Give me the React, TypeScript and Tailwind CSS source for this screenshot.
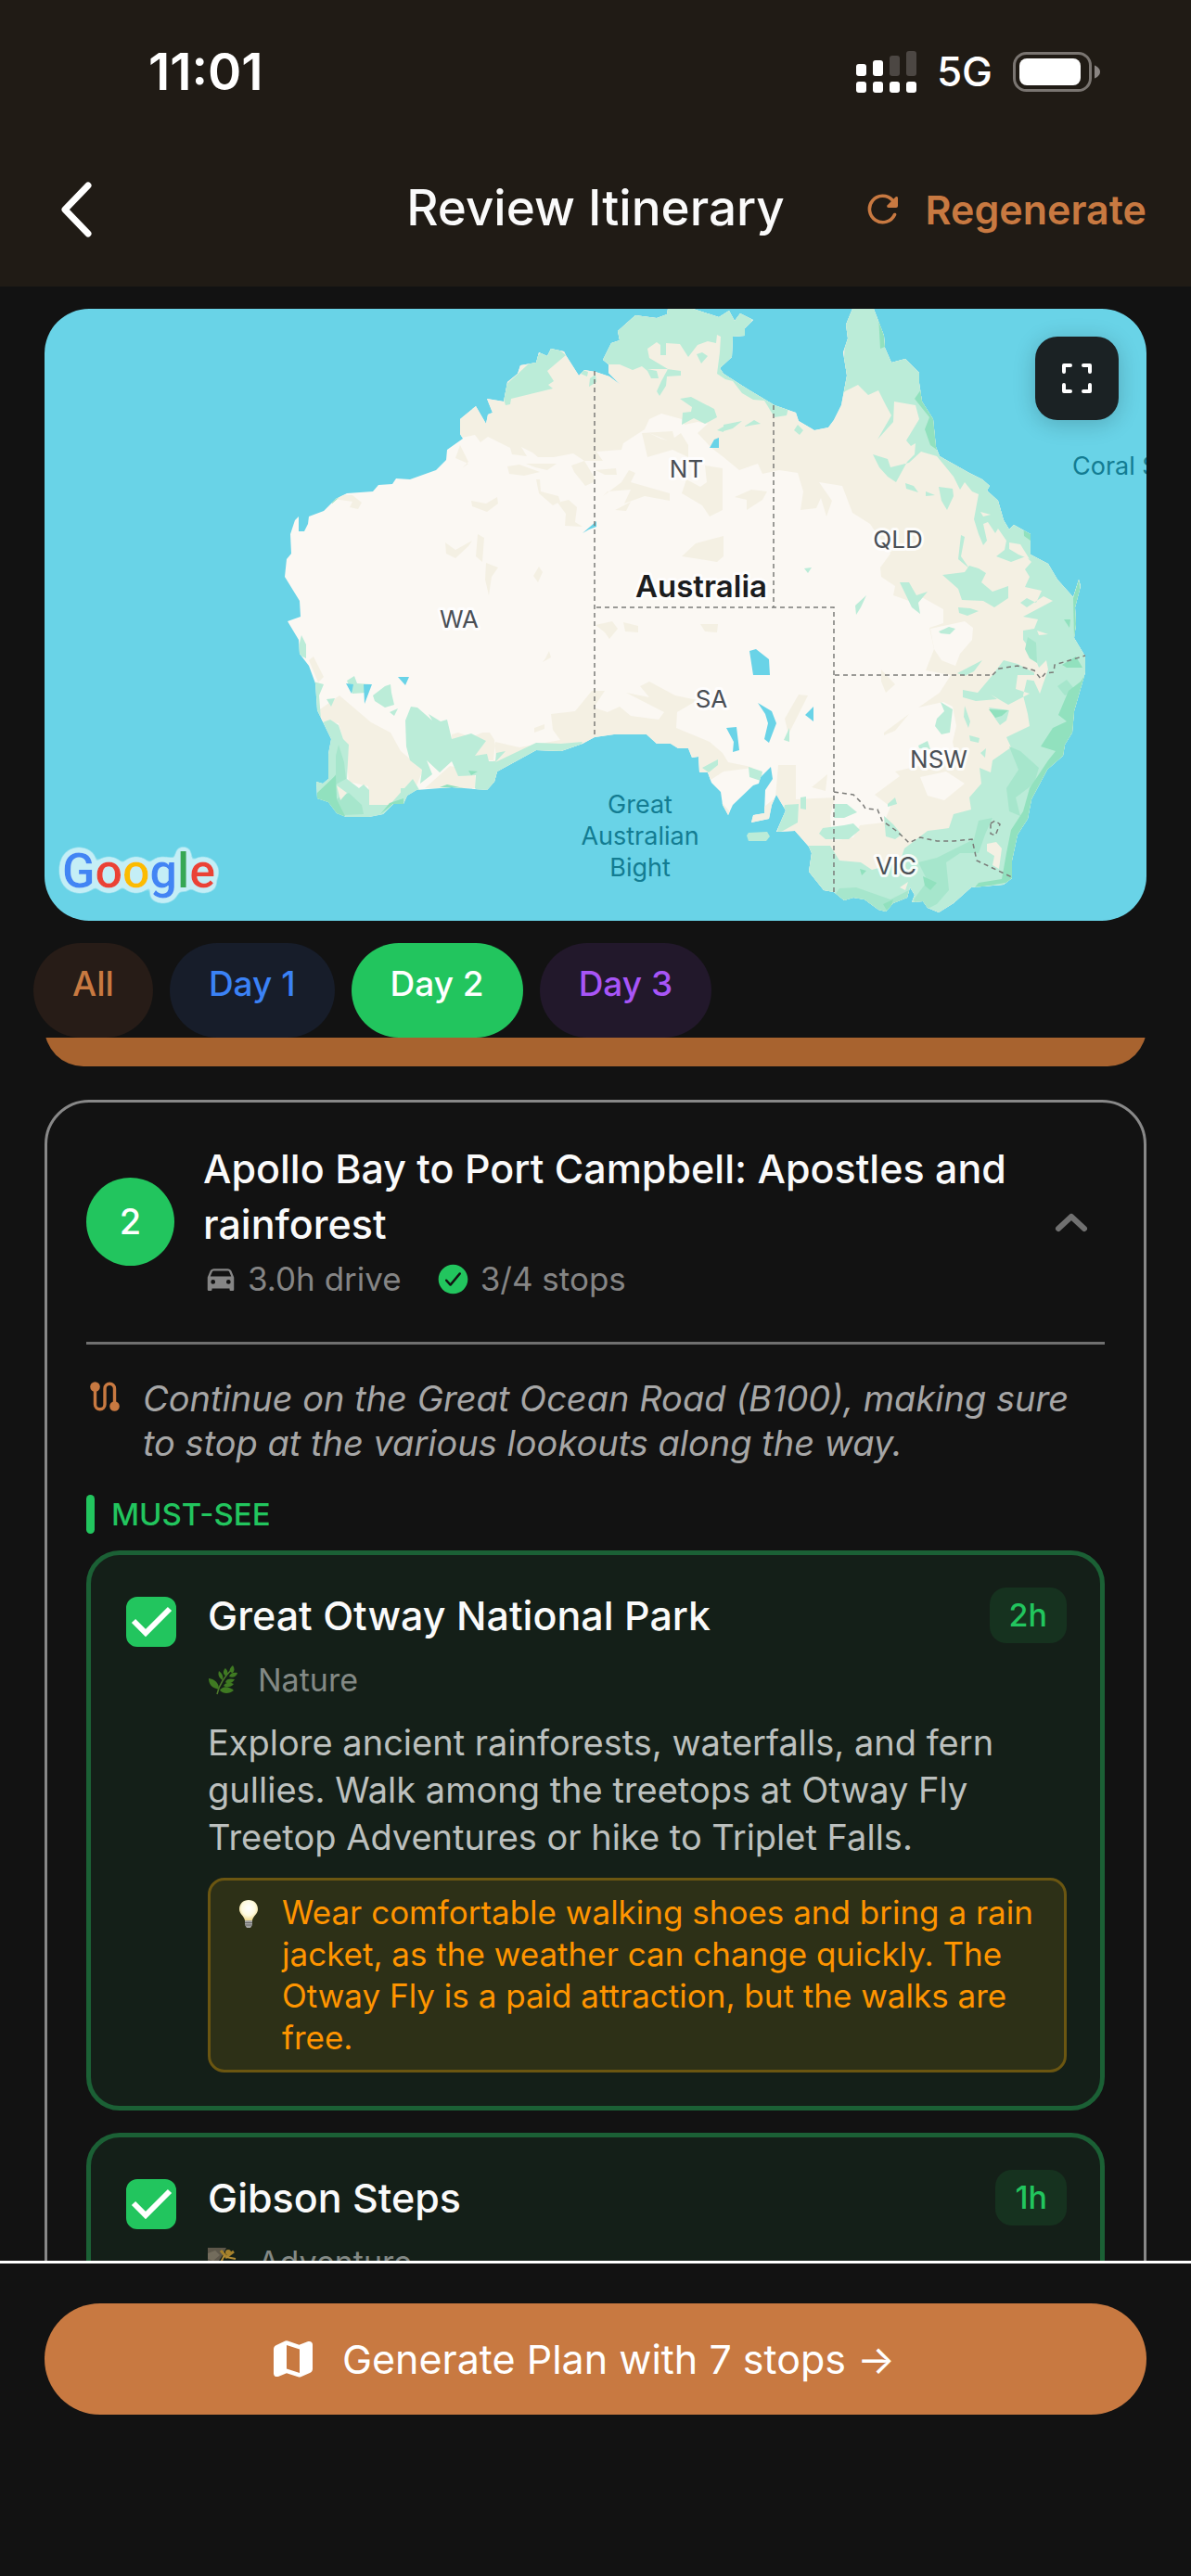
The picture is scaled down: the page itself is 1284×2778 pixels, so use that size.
import { useState } from "react";
import { IoCar, IoCheckmarkCircle } from "react-icons/io5";

type Stop = {
  id: string;
  name: string;
  duration: string;
  category: string;
  icon: "leaf" | "climb";
  description?: string;
  tip?: string;
};

const stops: Stop[] = [
  {
    id: "otway",
    name: "Great Otway National Park",
    duration: "2h",
    category: "Nature",
    icon: "leaf",
    description:
      "Explore ancient rainforests, waterfalls, and fern gullies. Walk among the treetops at Otway Fly Treetop Adventures or hike to Triplet Falls.",
    tip: "Wear comfortable walking shoes and bring a rain jacket, as the weather can change quickly. The Otway Fly is a paid attraction, but the walks are free.",
  },
  {
    id: "gibson",
    name: "Gibson Steps",
    duration: "1h",
    category: "Adventure",
    icon: "climb",
  },
];

const tabs = [
  { label: "All", idle: "bg-[#271c17] text-[#c87941]" },
  { label: "Day 1", idle: "bg-[#171d2a] text-[#3b82f6]" },
  { label: "Day 2", idle: "bg-[#12291b] text-[#22c55e]" },
  { label: "Day 3", idle: "bg-[#22182b] text-[#a855f7]" },
];

const COAST =
  "M720 333L719 339L708 343L685 340L666 357L668 367L659 370L650 388L656 393L656 402L669 415L657 406L642 401L630 399L624 405L610 383L608 379L594 376L590 384L581 380L578 391L561 394L558 403L547 412L543 433L525 430L531 445L526 447L524 457L513 438L496 452L496 468L499 473L482 485L481 496L470 507L442 517L427 516L423 522L408 523L402 530L374 532L362 538L349 551L333 557L332 565L328 573L322 573L322 557L318 561L313 576L314 597L309 603L307 622L323 648L324 665L310 670L322 690L323 705L333 718L340 737L342 766L357 797L354 813L354 840L348 845L341 843L342 861L354 865L363 877L373 881L398 881L413 878L424 867L435 867L439 858L449 852L487 849L525 852L533 843L536 832L578 809L605 810L628 802L641 795L662 792L697 792L708 802L723 802L731 807L742 807L746 817L753 816L754 833L763 833L767 844L777 854L779 868L785 879L790 868L812 847L818 845L820 838L831 827L833 840L825 852L824 877L812 879L810 887L829 883L832 868L837 857L847 874L837 897L857 896L872 913L875 920L872 940L888 960L899 962L910 971L920 968L932 970L947 981L955 983L963 974L978 968L981 957L986 965L983 973L995 972L1000 979L1012 984L1028 974L1047 957L1082 954L1091 947L1091 928L1097 900L1108 883L1112 862L1129 830L1146 815L1148 803L1156 790L1158 767L1170 725L1170 708L1158 688L1160 673L1159 655L1165 632L1163 625L1157 644L1140 625L1130 608L1111 598L1111 576L1093 566L1088 571L1082 561L1076 540L1064 529L1067 524L1059 517L1045 510L1013 492L1009 482L1006 452L994 433L991 413L991 402L976 387L961 391L954 375L953 362L942 333L919 333L912 350L914 365L909 380L913 405L907 437L899 453L893 461L878 464L861 454L858 445L835 437L805 419L780 403L776 397L789 385L790 363L803 362L803 354L812 345L798 338L792 346L786 335L775 342L747 333Z";

const DRY = [
  "M440 440L498 472L512 469L518 477L526 471L550 483L552 490L568 492L562 482L574 488L580 493L597 493L618 489L630 497L650 497L643 487L670 485L672 478L695 463L700 452L713 446L735 452L738 458L752 455L763 457L752 467L767 483L780 493L797 507L817 500L822 511L840 507L860 510L866 530L863 550L880 548L885 537L891 557L897 540L883 520L908 524L919 553L938 565L960 597L949 612L950 622L965 632L963 642L980 648L992 643L1017 657L1017 672L1002 677L1007 700L998 723L1025 728L1013 747L990 763L1017 757L1027 762L1031 783L1027 800L1030 815L1013 822L990 826L965 832L970 837L943 857L960 870L953 887L927 890L920 903L897 907L895 880L900 860L858 862L858 825L839 825L836 860L800 890L760 845L780 832L812 828L805 826L785 822L779 812L765 800L729 785L730 768L752 755L728 750L700 735L690 740L700 752L675 747L716 768L710 776L680 772L668 762L655 768L640 763L652 745L638 745L620 767L594 770L596 787L604 798L560 806L534 800L532 820L520 880L600 870L900 1010L1200 990L1200 320L440 320Z",
  "M345 765L366 750L400 779L421 790L432 810L456 830L448 850L424 869L398 871L397 848L376 843L372 805L365 780L346 778Z",
  "M333 712L338 708L349 730L343 736Z",
  "M458 850L485 826L512 832L513 850Z",
  "M487 792L494 790L508 795L520 790L528 790L533 798L535 820L520 820L487 800Z",
  "M491 494L505 500L498 505L505 498L496 480Z",
  "M547 503L560 501L582 509L565 513L549 511Z",
  "M567 500L600 500L590 507L577 504Z",
  "M578 517L582 517L583 530L602 535L604 541L596 545L581 532Z",
  "M616 502L630 497L641 515L640 520L631 524L619 509Z",
  "M508 540L524 543L536 536L537 543L525 552L509 546Z",
  "M601 542L613 539L622 547L620 563L628 568L609 567L610 554Z",
  "M480 585L491 593L509 583L505 589L491 602L481 597Z",
  "M515 576L522 580L520 606L513 600Z",
  "M524 607L537 612L530 622L527 642L523 625Z",
  "M581 611L585 617L580 628L575 621Z",
  "M642 507L664 505L665 512L652 512Z",
  "M650 535L670 520L678 507L685 510L680 520L722 532L722 540L695 535L673 543L680 528L655 530Z",
  "M669 547L680 541L675 551L663 550Z",
  "M692 467L725 465L727 472L734 467L742 480L742 493L725 485L698 493Z",
  "M760 502L779 505L779 550L765 557L757 545L735 532L740 517L755 525L762 520Z",
  "M735 600L750 586L780 578L780 600L773 606Z",
  "M361 533L380 534L390 542L386 549L377 547L380 541L360 538Z",
  "M588 710L592 702L594 709L585 714Z",
  "M576 785L587 781L587 786L576 790Z",
  "M642 674L660 670L666 678L657 689L652 682Z",
  "M672 671L688 675L688 682L674 681Z",
  "M755 673L774 673L773 682L760 681Z",
  "M792 536L810 528L827 530L822 539L805 550L805 539Z",
  "M861 749L871 750L855 782L850 792L846 775Z",
  "M950 722L965 738L955 747L950 735Z",
  "M953 790L980 770L965 788L953 793Z",
  "M875 849L892 835L890 853Z",
];

const GRASS = [
  "M640 320L650 388L656 393L668 393L682 399L692 395L698 400L702 408L710 408L708 400L698 398L719 398L734 400L734 405L719 406L718 416L711 427L708 422L713 411L720 398L700 386L698 376L708 369L712 372L712 383L718 383L718 370L733 371L742 385L752 372L763 368L772 370L773 361L777 363L776 380L773 403L782 409L790 411L800 424L812 431L824 432L835 450L848 448L850 440L790 400L820 320Z",
  "M594 370L540 420L545 437L550 436L551 430L596 419L591 415L597 411L590 400L610 383Z",
  "M626 398L634 401L633 406L626 403Z",
  "M636 408L642 404L643 412L635 417Z",
  "M733 430L745 428L770 441L773 450L760 457L748 451L735 458L736 445L745 444L746 439Z",
  "M751 382L757 380L763 384L756 392Z",
  "M773 464L780 460L780 466Z",
  "M919 320L912 350L907 437L905 440L899 438L911 422L925 415L936 426L947 421L955 437L961 448L946 474L963 455L964 433L987 437L991 452L977 475L982 481L987 478L986 490L978 498L966 520L957 514L948 504L941 490L957 495L960 504L980 499L993 487L1010 492L1028 514L1035 528L1040 520L1048 530L1055 533L1050 560L1055 576L1060 588L1064 583L1060 565L1065 563L1073 575L1076 570L1085 583L1083 593L1074 600L1090 606L1106 600L1112 606L1105 614L1110 622L1105 633L1123 637L1117 650L1107 645L1100 650L1107 655L1125 643L1135 648L1103 665L1119 668L1115 678L1103 680L1103 690L1109 698L1118 715L1122 725L1120 735L1107 733L1103 750L1108 770L1110 783L1085 795L1090 806L1070 820L1068 833L1056 828L1058 845L1045 860L1047 873L1028 878L1023 893L1000 896L975 915L970 930L940 938L928 930L905 928L895 912L872 912L860 930L900 1010L1200 1010L1200 330Z",
  "M1016 620L1040 617L1045 610L1055 613L1063 618L1058 628L1070 638L1087 632L1087 645L1072 655L1060 648L1037 647L1033 635Z",
  "M970 628L980 628L988 642L1000 638L990 650L992 662L983 655Z",
  "M922 653L934 642L928 655L923 663Z",
  "M1012 525L1027 527L1028 535L1021 550L1015 540Z",
  "M976 521L985 524L990 531L977 527Z",
  "M998 530L1008 534L998 535Z",
  "M1036 577L1040 579L1036 600L1045 613L1033 603Z",
  "M867 613L875 612L871 618Z",
  "M780 458L800 454L790 462L780 465Z",
  "M802 460L813 453L820 457Z",
  "M856 464L860 458L866 464L862 469Z",
  "M1012 681L1023 676L1030 678L1024 684L1014 683Z",
  "M1033 655L1046 656L1055 659L1043 664L1034 661Z",
  "M1032 726L1059 712L1050 724L1040 729Z",
  "M1070 728L1082 712L1097 716L1120 728L1097 728L1095 743L1110 748L1087 760L1068 749L1075 754L1052 756L1038 752L1038 744L1054 747L1060 740Z",
  "M1014 757L1027 765L1024 790L1015 792L1008 783L1010 775L1018 767Z",
  "M1040 761L1046 778L1044 785L1039 773Z",
  "M1045 793L1056 796L1055 801L1046 799Z",
  "M990 804L1000 799L1003 808L991 807Z",
  "M1057 812L1063 807L1062 817Z",
  "M1066 763L1088 766L1085 777L1078 782L1073 775Z",
  "M900 867L913 867L924 876L910 882L899 882Z",
  "M887 893L910 890L920 888L927 895L915 905L890 905L883 899Z",
  "M846 868L861 867L860 887L837 900L843 880Z",
  "M845 798L851 785L851 800Z",
  "M807 827L822 832L820 842L808 838Z",
  "M863 860L869 859L869 873L863 872Z",
  "M953 880L963 889L972 900L965 905L955 902Z",
  "M957 867L965 860L967 867L957 870Z",
  "M325 685L330 695L330 710L320 705Z",
  "M338 735L349 738L344 750L346 775L330 770Z",
  "M345 780L356 776L365 782L370 797L376 803L374 840L387 850L392 846L398 852L398 868L420 868L445 840L460 865L398 900L330 880L330 845L350 840L354 800Z",
  "M352 754L361 753L357 762Z",
  "M374 734L382 729L385 737L400 738L395 747L380 748Z",
  "M402 750L415 740L421 738L422 747L425 760L415 763L404 756Z",
  "M420 768L429 764L425 772Z",
  "M437 777L443 762L450 763L466 777L462 770L475 778L482 776L487 797L508 791L524 799L512 815L525 813L527 821L534 821L535 812L545 810L534 822L578 801L605 802L628 800L620 815L560 820L525 862L512 850L513 836L494 837L487 821L474 833L460 820L466 835L453 845L455 830L442 820L438 805Z",
  "M432 850L445 848L440 870L432 865Z",
  "M757 828L774 819L774 825L764 833Z",
];

const WOODLAND = [
  "M1088 805L1100 810L1120 828L1115 845L1095 860L1100 880L1088 875L1085 850L1098 830Z",
  "M1055 885L1070 882L1062 900L1055 920L1035 920L1020 930L1023 960L1010 975L990 985L985 970L1000 950L990 930L1010 925L1050 905Z",
  "M923 957L960 970L980 960L975 980L945 990L900 965L905 958Z",
  "M365 803L371 822L373 840L362 846L352 850L362 835L362 815Z",
  "M362 862L376 855L390 868L392 878L370 879Z",
  "M1108 687L1117 693L1118 715L1110 710L1105 700Z",
  "M1140 740L1150 733L1160 745L1148 750Z",
];

const FOREST = [
  "M947 340L953 362L954 374L949 376Z",
  "M993 420L1012 455L1010 485L1003 480L997 463L1002 450L986 430Z",
  "M1103 560L1111 575L1111 583L1104 578Z",
  "M1163 625L1157 645L1158 690L1166 650Z",
  "M1147 668L1154 668L1153 677Z",
  "M1145 717L1160 708L1167 720L1150 720Z",
  "M1175 720L1160 810L1125 850L1095 950L1050 958L1055 952L1080 948L1085 920L1090 895L1103 875L1110 850L1130 820L1138 810L1122 805L1135 785L1150 778L1141 771L1152 745L1165 735Z",
  "M952 975L963 970L958 985Z",
  "M927 937L934 939L929 944Z",
  "M995 945L1010 952L1003 960L997 955Z",
  "M362 836L363 862L372 880L365 884L340 870L342 855Z",
  "M410 878L424 867L435 867L435 861L420 866Z",
  "M474 849L482 846L500 850Z",
  "M505 831L515 832L508 836Z",
  "M358 540L366 536L358 543Z",
  "M1066 765L1087 766L1080 772L1073 774Z",
];

const LAKES = [
  "M628 575L643 562L643 568L635 571Z",
  "M373 737L381 738L379 748Z",
  "M392 738L401 738L393 759Z",
  "M429 730L441 730L437 739Z",
  "M765 483L770 474L775 472L775 483Z",
  "M808 702L815 700L829 711L830 728L812 728Z",
  "M817 758L832 767L837 780L829 801L824 797L828 780L825 770Z",
  "M868 771L877 762L877 778Z",
  "M783 785L794 784L797 809L790 811L791 800Z",
];

const BORDERS = [
  "M641 400V795",
  "M834 437V655",
  "M643 655H899V962",
  "M900 728H1070",
  "M1070 728L1077 721L1097 718L1115 723L1122 732L1127 726L1136 725L1137 717L1170 707",
  "M899 854L920 857L930 867L933 872L946 873L951 885L965 895L973 902L980 909L992 903L1010 907L1028 907L1048 905L1053 928L1091 946",
  "M1068 888L1073 885L1078 889L1073 901L1068 899Z",
];

const stateLabels = [
  { text: "NT", x: 740, y: 515 },
  { text: "WA", x: 495, y: 677 },
  { text: "QLD", x: 968, y: 591 },
  { text: "SA", x: 767, y: 763 },
  { text: "NSW", x: 1012, y: 828 },
  { text: "VIC", x: 966, y: 943 },
];

function AustraliaMap() {
  return (
    <svg
      viewBox="48 333 1188 660"
      preserveAspectRatio="xMidYMid slice"
      className="block w-full bg-[#69d3e7] font-['Inter',sans-serif]"
      role="img"
      aria-label="Map of Australia"
    >
      <defs>
        <clipPath id="land">
          <path d={COAST} />
        </clipPath>
        <filter id="halo" x="-10%" y="-30%" width="120%" height="160%">
          <feGaussianBlur in="SourceAlpha" stdDeviation="4" result="soft" />
          <feComponentTransfer in="soft" result="edge">
            <feFuncA type="linear" slope="20" intercept="-1" />
          </feComponentTransfer>
          <feFlood floodColor="#c4eef6" />
          <feComposite in2="edge" operator="in" result="outline" />
          <feMerge>
            <feMergeNode in="outline" />
            <feMergeNode in="SourceGraphic" />
          </feMerge>
        </filter>
      </defs>
      <path d={COAST} fill="#fbf8f3" />
      <g clipPath="url(#land)">
        <path d={DRY.join("")} fill="#f4f0e3" />
        <path
          d="M1003 678L1040 670L1049 677L1048 690L1035 705L1030 718L1015 712L1007 700ZM992 838L1020 832L1040 845L1018 863L1000 858ZM700 467L720 475L712 473Z"
          fill="#fbf8f3"
        />
        <path d={GRASS.join("")} fill="#bbecd8" />
        <path d={WOODLAND.join("")} fill="#a6e6cc" />
        <path d={FOREST.join("")} fill="#91e1be" />
        <path
          d="M1064 910L1074 908L1080 915L1077 937L1070 933L1072 923L1064 918ZM1115 725L1128 712L1130 722L1121 748L1115 735ZM1118 680L1130 684L1120 685ZM970 957L979 951L976 960ZM1088 585L1100 587L1110 603L1098 598L1088 592ZM1057 552L1068 555L1060 557ZM363 847L374 855L367 863Z"
          fill="#f4f0e3"
        />
      </g>
      <path d="M805 901L807 898L827 897L830 902L826 907L807 907Z" fill="#bbecd8" />
      <path d={LAKES.join("")} fill="#69d3e7" />
      <path
        d={BORDERS.join("")}
        fill="none"
        stroke="#7b7b78"
        strokeWidth="1.5"
        strokeDasharray="5 4"
      />
      <g
        fontSize="26"
        fill="#4a4f55"
        stroke="#fff"
        strokeOpacity="0.85"
        strokeWidth="6"
        strokeLinejoin="round"
        paintOrder="stroke"
        textAnchor="middle"
      >
        {stateLabels.map((s) => (
          <text key={s.text} x={s.x} y={s.y}>
            {s.text}
          </text>
        ))}
        <text x="756" y="644" fontSize="33" fontWeight="600" fill="#1b1c1e">
          Australia
        </text>
      </g>
      <g fontSize="27" fill="#137c92">
        <text x="1156" y="512">
          Coral Sea
        </text>
        <g textAnchor="middle">
          <text x="690" y="877">
            Great
          </text>
          <text x="690" y="911">
            Australian
          </text>
          <text x="690" y="945">
            Bight
          </text>
        </g>
      </g>
      <text
        x="67"
        y="957"
        fontSize="52"
        fontWeight="500"
        className="font-['Roboto',sans-serif]"
        filter="url(#halo)"
      >
        <tspan fill="#4285f4">G</tspan>
        <tspan fill="#ea4335">o</tspan>
        <tspan fill="#fbbc04">o</tspan>
        <tspan fill="#4285f4">g</tspan>
        <tspan fill="#34a853">l</tspan>
        <tspan fill="#ea4335">e</tspan>
      </text>
    </svg>
  );
}

function SignalIcon() {
  return (
    <svg viewBox="0 0 65 45" className="h-[45px] w-[65px]" fill="#fff">
      <rect x="0" y="14" width="11" height="13" rx="3" />
      <rect x="18" y="10" width="11" height="17" rx="3" />
      <rect x="36" y="5" width="11" height="22" rx="3" fill="#4c4743" />
      <rect x="54" y="0" width="11" height="27" rx="3" fill="#4c4743" />
      <rect x="0" y="33" width="11" height="12" rx="3" />
      <rect x="18" y="33" width="11" height="12" rx="3" />
      <rect x="36" y="33" width="11" height="12" rx="3" />
      <rect x="54" y="33" width="11" height="12" rx="3" />
    </svg>
  );
}

function BatteryIcon() {
  return (
    <svg viewBox="0 0 94 43" className="h-[43px] w-[94px]">
      <rect x="1.5" y="1.5" width="82" height="40" rx="13" fill="none" stroke="#7a7571" strokeWidth="3" />
      <rect x="7" y="7" width="66" height="29" rx="8" fill="#fff" />
      <path d="M88 14.5c3.5 1.5 6 4 6 7s-2.5 5.500-6 7z" fill="#8a8582" />
    </svg>
  );
}

function BackIcon() {
  return (
    <svg viewBox="0 0 36 60" className="h-[60px] w-9" fill="none" stroke="#fff">
      <path d="M31 4L6 30L31 56" strokeWidth="7" strokeLinecap="round" strokeLinejoin="round" />
    </svg>
  );
}

function RefreshIcon() {
  return (
    <svg viewBox="0 0 34 34" className="h-[34px] w-[34px]">
      <path
        d="M29.500 22.500A14.200 14.200 0 1 1 27 6.800"
        fill="none"
        stroke="currentColor"
        strokeWidth="3.600"
        strokeLinecap="round"
      />
      <path d="M33 4.500V13a2 2 0 0 1-2 2h-8c-1.800 0-2.400-1.600-1.300-2.800l8.700-8.700C31.500 2.500 33 3 33 4.500z" fill="currentColor" />
    </svg>
  );
}

function FullscreenIcon() {
  return (
    <svg
      viewBox="0 0 32 32"
      className="h-8 w-8"
      fill="none"
      stroke="currentColor"
      strokeWidth="4"
      strokeLinecap="round"
      strokeLinejoin="round"
    >
      <path d="M2 9V2H9M23 2h7v7M30 23v7h-7M9 30H2v-7" />
    </svg>
  );
}

function CollapseIcon() {
  return (
    <svg viewBox="0 0 36 22" className="h-[22px] w-9" fill="none" stroke="currentColor">
      <path d="M4 18L18 5L32 18" strokeWidth="6" strokeLinecap="round" strokeLinejoin="round" />
    </svg>
  );
}

function RouteIcon() {
  return (
    <svg viewBox="0 0 32 32" className="mt-[6px] h-8 w-8 shrink-0">
      <path
        d="M5.500 6v18.500a5.200 5.200 0 0 0 10.500 0V7.500a5.200 5.200 0 0 1 10.500 0V26"
        fill="none"
        stroke="currentColor"
        strokeWidth="3.400"
      />
      <circle cx="5.5" cy="5.5" r="5.3" fill="currentColor" />
      <circle cx="26.5" cy="26.5" r="5.3" fill="currentColor" />
    </svg>
  );
}

function PlanIcon() {
  return (
    <svg viewBox="0 0 42 40" className="h-10 w-[42px]" fill="currentColor" fillRule="evenodd">
      <path d="M12.500.600a4 4 0 0 1 2.800 0L27.500 4.800 36.500 1.300C39.500.200 42 1.600 42 4.600V30.500c0 2.200-1 3.700-3 4.400l-9.700 4.400a4 4 0 0 1-2.900 0L14 35.200 5.500 38.700C2.500 39.800 0 38.400 0 35.400V9.500C0 7.300 1 5.800 3 5.100zM14 5V30.500L28 35V9.500z" />
    </svg>
  );
}

function LeafIcon() {
  return (
    <svg viewBox="0 0 32 32" className="h-8 w-8 shrink-0" fill="#3f7a22">
      <path d="M10 31C12 21 18 12 27 3" fill="none" stroke="#4f7a2c" strokeWidth="1.5" />
      <path d="M27 8C23 8 22 4 27 0C29 3 29 6 27 8Z" />
      <path d="M20 12C15 9 17 5 19 3C22 6 22 9 20 12Z" />
      <path d="M16 16C11 13 11 9 12 6C16 9 17 12 16 16Z" />
      <path d="M12 26C3 24 1 19 1 14C8 15 12 19 12 26Z" />
      <path d="M23 12C24 8 28 7 32 8C31 12 27 14 23 12Z" />
      <path d="M19 18C20 14 25 14 29 15C27 19 22 21 19 18Z" />
      <path d="M13 27C16 22 22 22 28 27C23 31 17 31 13 27Z" />
      <path d="M17 22C19 18 24 18 28 20C25 24 20 24 17 22Z" />
    </svg>
  );
}

function ClimbIcon() {
  return (
    <svg viewBox="0 0 32 32" className="h-8 w-8 shrink-0">
      <path d="M0 0H20L16 8L12 14L14 24L8 32H0Z" fill="#5d574a" />
      <path d="M0 6L8 3L13 8L6 14L0 12Z" fill="#736c5c" />
      <path d="M14 3L20 10L28 4" fill="none" stroke="#a5812c" strokeWidth="3" />
      <path d="M18 8L13 18M20 10L30 12" fill="none" stroke="#b18b35" strokeWidth="2" />
      <circle cx="22" cy="5" r="3" fill="#a5812c" />
      <path d="M18 14H27L28 24H19Z" fill="#3c6382" />
      <path d="M20 24L16 32M26 24L28 32" stroke="#2e4a63" strokeWidth="3" />
    </svg>
  );
}

function BulbIcon() {
  return (
    <svg viewBox="0 0 32 32" className="mt-2 h-8 w-8 shrink-0">
      <defs>
        <radialGradient id="glow" cx="0.5" cy="0.4" r="0.6">
          <stop offset="0" stopColor="#fff" />
          <stop offset="0.6" stopColor="#fffbe0" />
          <stop offset="1" stopColor="#efd98c" />
        </radialGradient>
      </defs>
      <path d="M16 1c6 0 10 4 10 10 0 5-5 7-6 12h-8C11 18 6 16 6 11 6 5 10 1 16 1z" fill="url(#glow)" />
      <path d="M12 23h8v5l-2 3h-4l-2-3z" fill="#a3a3a3" />
      <path d="M12 25.5h8M12 28h8" stroke="#6b6b6b" strokeWidth="1" />
    </svg>
  );
}

function StopCard({ stop }: { stop: Stop }) {
  const [checked, setChecked] = useState(true);

  return (
    <article className="flex gap-[34px] rounded-[36px] border-[5px] border-[#1b6035] bg-[#141f18] pt-[35px] pr-9 pb-9 pl-[38px]">
      <div className="mt-[10px] grid h-[54px] w-[54px] shrink-0">
        <input
          type="checkbox"
          id={stop.id}
          checked={checked}
          onChange={(e) => setChecked(e.target.checked)}
          className="col-start-1 row-start-1 h-full w-full cursor-pointer appearance-none rounded-xl border-[3px] border-[#22c55e] checked:bg-[#22c55e]"
        />
        {checked && (
          <svg
            viewBox="0 0 54 54"
            className="pointer-events-none col-start-1 row-start-1"
            fill="none"
            stroke="#fff"
            strokeWidth="6"
          >
            <path d="M8 26L21 39L47 13" />
          </svg>
        )}
      </div>
      <div className="min-w-0 flex-1">
        <div className="flex items-start justify-between">
          <label htmlFor={stop.id} className="text-[43px] leading-[60px] font-medium text-[#fafafa]">
            {stop.name}
          </label>
          <span className="rounded-[18px] bg-[#16321f] px-[21px] text-[34px] leading-[60px] font-medium text-[#22c55e]">
            {stop.duration}
          </span>
        </div>
        <p className="mt-[14px] flex items-center gap-[22px] text-[34px] leading-[52px] text-[#838985]">
          {stop.icon === "leaf" ? <LeafIcon /> : <ClimbIcon />}
          {stop.category}
        </p>
        {stop.description && (
          <p className="mt-4 pr-10 text-[38px] leading-[51px] text-[#bcc0be]">
            {stop.description}
          </p>
        )}
        {stop.tip && (
          <div className="mt-[18px] flex gap-5 rounded-[18px] border-[3px] border-[#6b5611] bg-[#2d3017] py-3 pr-4 pl-[25px]">
            <BulbIcon />
            <p className="text-[35px] leading-[45px] text-[#ff9500]">{stop.tip}</p>
          </div>
        )}
      </div>
    </article>
  );
}

export default function App() {
  const [activeTab, setActiveTab] = useState("Day 2");

  return (
    <div className="flex h-screen flex-col overflow-hidden bg-[#121212] font-['Inter',sans-serif] text-white">
      <header className="bg-[#201b15] px-12">
        <div className="flex h-[154px] items-center justify-between pr-[50px] pl-[112px]">
          <span className="text-[55px] leading-none font-semibold">11:01</span>
          <div className="flex items-center">
            <SignalIcon />
            <span className="ml-[22px] text-[44px] leading-none font-medium">5G</span>
            <span className="ml-[22px]">
              <BatteryIcon />
            </span>
          </div>
        </div>
        <div className="grid h-[155px] grid-cols-[1fr_auto_1fr] items-baseline pt-[42px]">
          <button type="button" aria-label="Back" className="ml-4 cursor-pointer self-start justify-self-start">
            <BackIcon />
          </button>
          <h1 className="pt-[2px] text-[53px] leading-none font-medium text-[#fafafa]">
            Review Itinerary
          </h1>
          <button
            type="button"
            className="flex cursor-pointer items-center gap-7 justify-self-end text-[43px] leading-none font-semibold text-[#c87941]"
          >
            <RefreshIcon />
            Regenerate
          </button>
        </div>
      </header>

      <main className="min-h-0 flex-1 overflow-hidden pt-6">
        <section className="relative mx-12 overflow-hidden rounded-[48px]">
          <AustraliaMap />
          <button
            type="button"
            aria-label="Full screen map"
            className="absolute top-[30px] right-[30px] flex h-[90px] w-[90px] cursor-pointer items-center justify-center rounded-3xl bg-[#1b2224] shadow-[0_4px_24px_rgba(0,0,0,0.2)]"
          >
            <FullscreenIcon />
          </button>
        </section>

        <nav className="mt-6 flex gap-[18px] px-9">
          {tabs.map((tab) => (
            <button
              type="button"
              key={tab.label}
              onClick={() => setActiveTab(tab.label)}
              className={`h-[102px] cursor-pointer rounded-full px-[42px] pb-[14px] text-[37px] font-medium ${activeTab === tab.label ? "bg-[#22c55e] text-white" : tab.idle}`}
            >
              {tab.label}
            </button>
          ))}
        </nav>

        {/* tail of the summary card, scrolled under the tabs */}
        <div className="mx-12 flex h-[31px] items-end overflow-hidden">
          <div className="h-24 w-full shrink-0 rounded-[42px] bg-[#a8632f]"></div>
        </div>

        <section className="mx-12 mt-9 rounded-[48px] border-[3px] border-[#888] px-[42px] pt-[41px]">
          <div className="flex items-center border-b-[3px] border-[#707070] pb-[42px]">
            <span className="flex h-[95px] w-[95px] shrink-0 items-center justify-center rounded-full bg-[#22c55e] text-[38px] font-medium">
              2
            </span>
            <div className="ml-[31px] min-w-0 flex-1">
              <h2 className="text-[43px] leading-[60px] font-medium text-[#fafafa]">
                Apollo Bay to Port Campbell: Apostles and rainforest
              </h2>
              <div className="flex items-center pt-1 text-[35px] leading-[51px] text-[#858585]">
                <IoCar size={38} />
                <span className="ml-[10px]">3.0h drive</span>
                <IoCheckmarkCircle size={39} className="ml-9 text-[#22c55e]" />
                <span className="ml-[10px]">3/4 stops</span>
              </div>
            </div>
            <button type="button" aria-label="Collapse day" className="mr-[18px] cursor-pointer text-[#707070]">
              <CollapseIcon />
            </button>
          </div>

          <div className="mt-[34px] flex gap-[25px] pl-1 text-[#c87941]">
            <RouteIcon />
            <p className="text-[38px] leading-[48px] text-[#a6a6a6] italic">
              Continue on the Great Ocean Road (B100), making sure to stop at the various lookouts
              along the way.
            </p>
          </div>

          <h3 className="mt-8 flex items-center gap-[18px] text-[33px] leading-[42px] font-medium text-[#22c55e]">
            <span className="h-[42px] w-[9px] rounded-full bg-[#22c55e]"></span>
            MUST-SEE
          </h3>

          <div className="mt-[18px] flex flex-col gap-6">
            {stops.map((stop) => (
              <StopCard key={stop.id} stop={stop} />
            ))}
          </div>
        </section>
      </main>

      <footer className="h-[340px] shrink-0 border-t-[3px] border-white bg-[#121212] px-12 pt-[43px]">
        <button
          type="button"
          className="flex h-[120px] w-full cursor-pointer items-center justify-center gap-8 rounded-full bg-[#c87941] pr-6 text-[43px]"
        >
          <PlanIcon />
          Generate Plan with 7 stops →
        </button>
      </footer>
    </div>
  );
}
